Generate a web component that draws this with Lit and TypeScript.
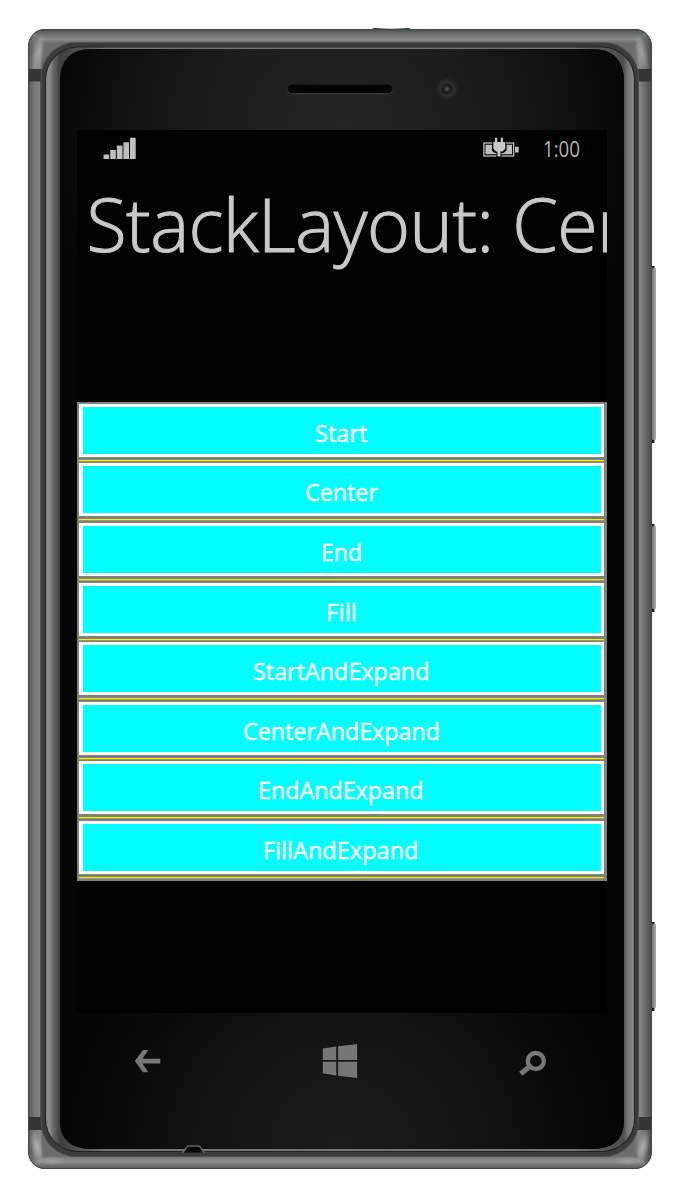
import { LitElement, html, svg, css } from "lit";
import { customElement, property } from "lit/decorators.js";

const OPTIONS: { label: string; width: number }[] = [
  { label: "Start", width: 50.5 },
  { label: "Center", width: 71 },
  { label: "End", width: 39 },
  { label: "Fill", width: 29 },
  { label: "StartAndExpand", width: 174.5 },
  { label: "CenterAndExpand", width: 195 },
  { label: "EndAndExpand", width: 163.5 },
  { label: "FillAndExpand", width: 153.5 },
];

@customElement("phone-shell")
export class PhoneShell extends LitElement {
  static styles = css`
    :host { display: block; }
    svg { display: block; }
  `;

  private sideKey(y: number, h: number) {
    return svg`
      <rect x="651" y=${y} width="3.500" height=${h} fill="#1c1f1e"/>
      <rect x="652" y=${y + 2} width="4" height=${h - 5} rx="1" fill="url(#key)"/>`;
  }

  render() {
    return html`
      <svg width="677" height="1200" viewBox="0 0 677 1200">
        <defs>
          <linearGradient id="metalL" gradientUnits="userSpaceOnUse" x1="28" x2="46" y1="0" y2="0">
            <stop offset="0" stop-color="#4c504f"/><stop offset=".12" stop-color="#5f6362"/>
            <stop offset=".4" stop-color="#7a7d7b"/><stop offset=".6" stop-color="#7b7e7c"/>
            <stop offset=".66" stop-color="#8b8d8c"/><stop offset=".8" stop-color="#6a6d6b"/>
            <stop offset="1" stop-color="#6a6d6b"/>
          </linearGradient>
          <linearGradient id="metalR" gradientUnits="userSpaceOnUse" x1="634" x2="652" y1="0" y2="0">
            <stop offset="0" stop-color="#6a6d6b"/><stop offset=".28" stop-color="#858886"/>
            <stop offset=".45" stop-color="#777b79"/>
            <stop offset=".75" stop-color="#5c615f"/><stop offset="1" stop-color="#434846"/>
          </linearGradient>
          <linearGradient id="metalT" gradientUnits="userSpaceOnUse" x1="0" x2="0" y1="29" y2="43">
            <stop offset="0" stop-color="#3d413f"/><stop offset=".15" stop-color="#595e5b"/>
            <stop offset=".5" stop-color="#737775"/><stop offset=".75" stop-color="#878a88"/>
            <stop offset="1" stop-color="#6a6d6b"/>
          </linearGradient>
          <linearGradient id="metalB" gradientUnits="userSpaceOnUse" x1="0" x2="0" y1="1156" y2="1169">
            <stop offset="0" stop-color="#6a6d6b"/><stop offset=".2" stop-color="#828583"/>
            <stop offset=".45" stop-color="#8b8e8c"/><stop offset=".8" stop-color="#666b68"/>
            <stop offset="1" stop-color="#535956"/>
          </linearGradient>
          <linearGradient id="bevel" gradientUnits="userSpaceOnUse" x1="46" x2="634" y1="0" y2="0">
            <stop offset="0" stop-color="#858585"/><stop offset=".006" stop-color="#8c8c8c"/>
            <stop offset=".013" stop-color="#666"/><stop offset=".024" stop-color="#3d3d3d"/>
            <stop offset=".06" stop-color="#555"/><stop offset=".1" stop-color="#747675"/>
            <stop offset=".9" stop-color="#747675"/><stop offset=".95" stop-color="#555"/>
            <stop offset=".982" stop-color="#4e4e4e"/><stop offset=".99" stop-color="#777"/>
            <stop offset="1" stop-color="#888"/>
          </linearGradient>
          <radialGradient id="glassTop" gradientUnits="userSpaceOnUse" cx="0" cy="0" r="1" gradientTransform="translate(342 135) scale(300 320)">
            <stop offset="0" stop-color="#242424"/><stop offset=".5" stop-color="#1a1a1a"/><stop offset=".9" stop-color="#090909"/><stop offset="1" stop-color="#040404"/>
          </radialGradient>
          <radialGradient id="glassBottom" gradientUnits="userSpaceOnUse" cx="0" cy="0" r="1" gradientTransform="translate(342 1150) scale(280 270)">
            <stop offset="0" stop-color="#1c1c1c"/><stop offset=".5" stop-color="#121212"/><stop offset="1" stop-color="#040404"/>
          </radialGradient>
          <linearGradient id="key" x1="0" x2="1" y1="0" y2="0">
            <stop offset="0" stop-color="#777"/><stop offset=".5" stop-color="#8d8d8d"/><stop offset="1" stop-color="#b0b0b0"/>
          </linearGradient>
          <radialGradient id="shine"><stop offset="0" stop-color="#b5b7b6" stop-opacity=".9"/><stop offset="1" stop-color="#b5b7b6" stop-opacity="0"/></radialGradient>
          <radialGradient id="lens"><stop offset="0" stop-color="#666"/><stop offset=".14" stop-color="#3a3a3a"/><stop offset=".35" stop-color="#1c1c1c"/><stop offset=".6" stop-color="#2d2d2d"/><stop offset="1" stop-color="#1b1b1b"/></radialGradient>
          <clipPath id="body"><rect x="28" y="29" width="624" height="1140" rx="17"/></clipPath>
        </defs>
        ${this.sideKey(266, 177)} ${this.sideKey(524, 88)} ${this.sideKey(922, 89)}
        <path d="M372 30V29Q373 27.500 376 28Q391 29.500 407 28Q410 27.500 411 29V30Z" fill="#3e4341"/>
        <g clip-path="url(#body)">
          <rect x="28" y="29" width="312" height="1140" fill="url(#metalL)"/>
          <rect x="340" y="29" width="312" height="1140" fill="url(#metalR)"/>
          <path d="M30 29H650L626 56H54Z" fill="url(#metalT)"/>
          <path d="M30 1169H650L626 1142H54Z" fill="url(#metalB)"/>
          <ellipse cx="38" cy="54" rx="6" ry="22" fill="url(#shine)" opacity=".8" transform="rotate(12 38 54)"/>
          <ellipse cx="642" cy="54" rx="6" ry="22" fill="url(#shine)" opacity=".7" transform="rotate(-12 642 54)"/>
          <ellipse cx="37" cy="1147" rx="6" ry="18" fill="url(#shine)" transform="rotate(-12 37 1147)"/>
          <ellipse cx="643" cy="1147" rx="6" ry="18" fill="url(#shine)" transform="rotate(12 643 1147)"/>
          <ellipse cx="52" cy="1161" rx="14" ry="5" fill="url(#shine)" opacity=".5"/>
          <ellipse cx="628" cy="1161" rx="14" ry="5" fill="url(#shine)" opacity=".5"/>
          <g fill="#333635">
            <rect x="28" y="69" width="14" height="12.500"/><rect x="637" y="69" width="15" height="12.500"/>
            <rect x="28" y="1117" width="14" height="13"/><rect x="637" y="1117" width="15" height="13"/>
          </g>
          <rect x="28.500" y="29.500" width="623" height="1139" rx="16.500" fill="none" stroke="#444947"/>
        </g>
        <rect x="40.500" y="42" width="598.500" height="1115" rx="36" fill="#3a3c3b"/>
        <rect x="41" y="42.500" width="597.500" height="1114" rx="35.500" fill="none" stroke="#4c4f4d"/>
        <rect x="45" y="46.500" width="590" height="1105.500" rx="33" fill="#1f2020"/>
        <rect x="46" y="47.500" width="588" height="1103.500" rx="32" fill="url(#bevel)"/>
        <path d="M60 82Q60 49 92 49H592Q624 49 624 82V1120Q624 1149 592 1149H92Q60 1149 60 1120Z" fill="#040404"/>
        <path d="M60 600V82Q60 49 92 49H592Q624 49 624 82V600Z" fill="url(#glassTop)"/>
        <path d="M60 600H624V1120Q624 1149 592 1149H92Q60 1149 60 1120Z" fill="url(#glassBottom)"/>
        <rect x="287" y="84.500" width="106" height="10" rx="5" fill="#343434"/>
        <rect x="287.500" y="84.500" width="105" height="8.500" rx="4.200" fill="#030303"/>
        <circle cx="447" cy="89" r="11.500" fill="url(#lens)"/>
        <circle cx="447" cy="89" r="3.800" fill="none" stroke="#161616" stroke-width="1"/>
        <path d="M182 1152.500Q185 1151.500 186 1148Q187 1146 189 1146H198Q200 1146 201 1148Q202 1151.500 205 1152.500" fill="#060606" stroke="#5f6160" stroke-width="1.400"/>
      </svg>`;
  }
}

@customElement("status-bar")
export class StatusBar extends LitElement {
  static styles = css`
    :host {
      display: flex;
      align-items: flex-start;
      height: 40px;
      padding: 7px 24px 0 26px;
      box-sizing: border-box;
    }
    svg { display: block; flex: none; overflow: visible; }
    .battery { margin-left: auto; }
    .clock { margin-left: 23px; }
  `;
  render() {
    return html`
      <svg width="34" height="24" viewBox="0 0 34 24" fill="#bfbfbf">
        <rect x=".5" y="17.500" width="5.700" height="4.500"/><rect x="7.200" y="13" width="5.600" height="9"/>
        <rect x="13.800" y="8.500" width="5.700" height="13.500"/><rect x="20.400" y="5.300" width="5.700" height="16.700"/>
        <rect x="27" y=".8" width="5.700" height="21.200"/>
      </svg>
      <svg class="battery" width="37" height="24" viewBox="0 0 37 24">
        <rect x=".9" y="6" width="29.700" height="13" fill="none" stroke="#bfbfbf" stroke-width="1.300"/>
        <path d="M2.500 7.800H9V13.500L11 15.500H14V17.300H2.500ZM23.500 7.800H29V17.300H18V15.500H21L23.500 13.500Z" fill="#bfbfbf"/>
        <path d="M9.300 4.500H23.200V13L20.500 15.800H18.500V20H13.500V15.800H12L9.300 13Z" fill="#000"/>
        <path d="M12 .8H14.200V5H17.800V.8H20V5H22.300V11.700L19.500 14.500H17.500V19.500H14.500V14.500H13L10.300 11.700V5H12Z" fill="#c8c8c8"/>
        <rect x="32" y="9.700" width="3.700" height="5.800" fill="#bfbfbf"/>
      </svg>
      <svg class="clock" width="40" height="24" viewBox="0 0 40 24">
        <text x="0" y="19.700" font-family="Open Sans, Noto Sans, sans-serif" font-size="21.500" fill="#b4b4b4" textLength="37" lengthAdjust="spacingAndGlyphs">1:00</text>
      </svg>`;
  }
}

@customElement("option-button")
export class OptionButton extends LitElement {
  @property() label = "";
  @property({ type: Number }) textWidth = 0;
  static styles = css`
    :host { display: block; height: 59.600px; box-sizing: border-box; padding: 2.300px 3px 0 2px; }
    .frame { height: 53px; box-sizing: border-box; border: 3px solid #fff; border-left-width: 4px; background: #0ff; display: flex; justify-content: center; padding-right: 2px; }
    .rule { height: 0; margin-top: 3px; border-top: 1px solid #f4f400; box-shadow: 0 1px #9c9c48; }
    svg { display: block; overflow: visible; }
  `;
  render() {
    return html`
      <div class="frame">
        <svg width=${this.textWidth} height="46" viewBox="0 0 ${this.textWidth} 46">
          <text x="-1" y="34.500" font-family="Open Sans, Noto Sans, sans-serif" font-size="23" fill="#fff" stroke="#fff" stroke-width=".4" textLength=${this.textWidth + 2} lengthAdjust="spacingAndGlyphs">${this.label}</text>
        </svg>
      </div>
      <div class="rule"></div>`;
  }
}

@customElement("nav-keys")
export class NavKeys extends LitElement {
  static styles = css`
    :host { display: flex; justify-content: space-between; align-items: center; padding: 0 60px 0 57px; height: 96px; box-sizing: border-box; }
    svg { display: block; overflow: visible; }
  `;
  render() {
    return html`
      <svg width="28" height="36" viewBox="0 0 28 36" fill="#777"><path d="M.800 18L9 7H14.300L8.500 15.700H26.300V20.500H8.500L14.300 29.200H9Z"/></svg>
      <svg width="35" height="36" viewBox="0.900 0 35 36" fill="#777"><path d="M.700 5.500L14.200 3.600V17H.700ZM16 3.300L35 .900V17H16ZM.700 18.800H14.200V32.400L.700 30.300ZM16 18.800H35V35L16 32.700Z"/></svg>
      <svg width="28" height="36" viewBox="0 0 28 36" fill="none" stroke="#777"><circle cx="16.800" cy="18" r="8" stroke-width="4.400"/><path d="M11 23.200L1.800 30.800" stroke-width="5"/></svg>`;
  }
}

@customElement("app-root")
export class AppRoot extends LitElement {
  static styles = css`
    :host { display: block; background: #fff; width: 677px; height: 1200px; overflow: hidden; }
    .stage { display: grid; width: 677px; height: 1200px; }
    .stage > * { grid-area: 1 / 1; }
    .face { display: flex; flex-direction: column; padding: 130px 70px 0 77px; }
    .screen { width: 530px; height: 883px; background: #000; overflow: hidden; box-sizing: border-box; }
    .title {
      display: block; height: 100px; margin: 4px 0 127.600px 9.500px;
      font: 300 73.500px/100px "Open Sans", "Noto Sans", sans-serif;
      color: #c8c8c8; white-space: nowrap; letter-spacing: -0.500px;
      -webkit-text-stroke: 1.100px #c8c8c8;
    }
    .list { background: #808080; height: 479.300px; }
  `;
  render() {
    return html`
      <div class="stage">
        <phone-shell></phone-shell>
        <div class="face">
          <div class="screen">
            <status-bar></status-bar>
            <div class="title">StackLayout: Center</div>
            <div class="list">
              ${OPTIONS.map((o) => html`<option-button .label=${o.label} .textWidth=${o.width}></option-button>`)}
            </div>
          </div>
          <nav-keys></nav-keys>
        </div>
      </div>`;
  }
}
